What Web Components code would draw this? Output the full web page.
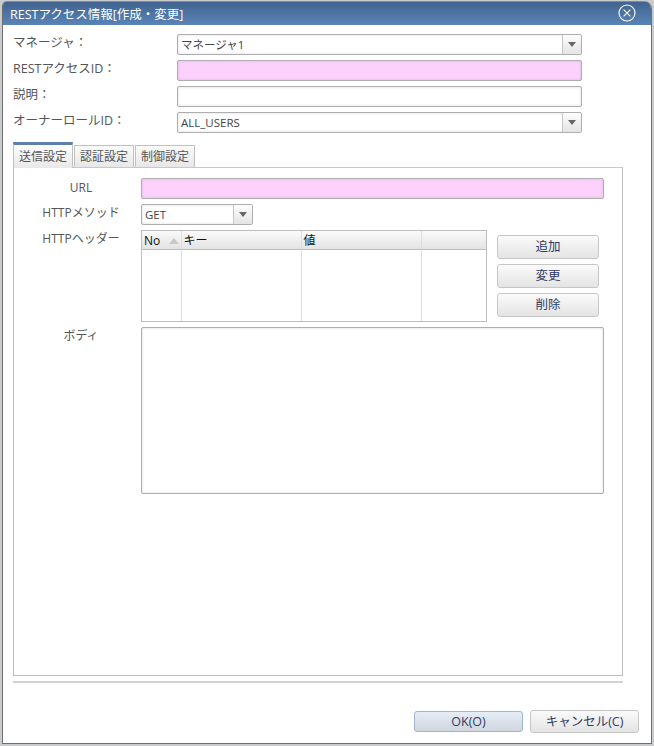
<!DOCTYPE html>
<html lang="ja"><head><meta charset="utf-8">
<style>
html,body{margin:0;height:746px;overflow:hidden;background:#c9cbcc}
body{font:12px "Open Sans","Noto Sans CJK JP",sans-serif;color:#555;padding:1px 2px 2px}
</style></head><body>
<x-dialog heading="RESTアクセス情報[作成・変更]">
  <x-row label="マネージャ："><x-select value="マネージャ1" w="405"></x-select></x-row>
  <x-row label="RESTアクセスID："><x-input w="405" required></x-input></x-row>
  <x-row label="説明："><x-input w="405"></x-input></x-row>
  <x-row label="オーナーロールID："><x-select value="ALL_USERS" w="405"></x-select></x-row>
  <x-tabs>
    <x-form-row label="URL" nudge="2" style="margin-top:10px"><x-input w="463" required></x-input></x-form-row>
    <x-form-row label="HTTPメソッド" style="margin-top:5px"><x-select value="GET" w="112"></x-select></x-form-row>
    <x-form-row label="HTTPヘッダー" style="margin-top:5px">
      <x-grid></x-grid>
      <x-stack><x-btn>追加</x-btn><x-btn>変更</x-btn><x-btn>削除</x-btn></x-stack>
    </x-form-row>
    <x-form-row label="ボディ" style="margin-top:5px"><x-textarea></x-textarea></x-form-row>
  </x-tabs>
  <x-footer slot="footer"><x-btn primary w="109" h="21">OK(O)</x-btn><x-btn w="109" h="23">キャンセル(C)</x-btn></x-footer>
</x-dialog>
<script>
function def(name,css,html,init){
  customElements.define(name,class extends HTMLElement{
    connectedCallback(){
      if(this.shadowRoot)return;
      const r=this.attachShadow({mode:'open'});
      r.innerHTML='<style>'+css+'</style>'+(typeof html==='function'?html(this):html);
      if(init)init(this,r);
    }
  });
}
const field=`box-sizing:border-box;border:1px solid #aeaeae;border-radius:2px;box-shadow:inset 0 0 3px rgba(0,0,0,.14);`;
def('x-dialog',`
 :host{display:flex;flex-direction:column;box-sizing:border-box;width:650px;height:743px;background:#fff;border:1px solid #6e6e6e;border-top:0;border-radius:5px 8px 0 0;overflow:hidden}
 header{height:23px;flex:none;display:flex;align-items:center;justify-content:space-between;padding:0 15px 1px 7px;box-sizing:content-box;height:22px;background:linear-gradient(#40638f,#5a84b7);color:#fff;font-size:12.5px;border-top:1px solid #8a8a8a}
 svg{display:block}
 main{flex:1;padding:9px 27px 0 10px;display:flex;flex-direction:column;gap:5px;min-height:0}
 footer{flex:none}
`,h=>`<header><span>${h.getAttribute('heading')}</span><svg width="18" height="18" viewBox="0 0 18 18" fill="none" stroke="#fff"><circle cx="9" cy="9" r="8" stroke-width="1.1"/><path d="M5.6 5.6l6.8 6.8M12.4 5.6l-6.8 6.8" stroke-width="1.1"/></svg></header><main><slot></slot></main><footer><slot name="footer"></slot></footer>`);
def('x-row',`:host{display:flex;height:21px;align-items:flex-start;line-height:16px}
 span{width:164px;flex:none;white-space:nowrap;color:#555;font-size:12.5px;padding-top:1px;box-sizing:border-box}`,
 h=>`<span>${h.getAttribute('label')}</span><slot></slot>`);
def('x-form-row',`:host{display:flex;line-height:16px;align-items:flex-start}
 span{box-sizing:border-box;width:127px;flex:none;padding-left:7px;text-align:center;white-space:nowrap;color:#555}
 .c{display:flex;gap:10px}`,
 h=>`<span style="padding-top:${h.getAttribute('nudge')||1}px">${h.getAttribute('label')}</span><div class="c"><slot></slot></div>`);
def('x-input',`:host{display:block;height:21px;${field}background:#fff}
 :host([required]){background:#fcd2fd}`,'',h=>{h.style.width=h.getAttribute('w')+'px'});
def('x-select',`:host{display:flex;height:21px;${field}background:#fff;overflow:hidden}
 span{flex:1;padding-left:3px;line-height:19px;color:#444;font-size:11.5px}
 i{width:18px;flex:none;border-left:1px solid #c4c4c4;background:linear-gradient(#fdfdfd,#e4e4e4);display:flex;align-items:center;justify-content:center}
 i::before{content:"";border:4px solid transparent;border-top:5px solid #666;border-bottom:0}`,
 h=>`<span>${h.getAttribute('value')}</span><i></i>`,h=>{h.style.width=h.getAttribute('w')+'px'});
def('x-tabs',`:host{display:flex;flex-direction:column;margin-top:3px;flex:1;width:610px}
 nav{display:flex;height:26px;gap:1px;align-items:flex-end}
 b{box-sizing:border-box;font-weight:400;height:23px;width:60px;border:1px solid #c0c0c0;border-bottom:0;background:linear-gradient(#fbfbfb,#e6e6e6);line-height:22px;text-align:center;color:#555;font-size:12px;margin-bottom:-1px}
 b.a{height:26px;border-top:3px solid #5c7fae;background:linear-gradient(#fff,#e8e8e8);line-height:23px;position:relative;z-index:1}
 section{box-sizing:border-box;height:509px;border:1px solid #bdbdbd;background:#fff;border-top-color:#c8c8c8}`,
 `<nav><b class="a">送信設定</b><b>認証設定</b><b>制御設定</b></nav><section><slot></slot></section>`);
def('x-grid',`:host{display:block;box-sizing:border-box;width:346px;height:92px;border:1px solid #bdbdbd;background:#fff;color:#111}
 table{border-collapse:collapse;table-layout:fixed;width:344px;height:90px}
 th,td{padding:0 2px;border-right:1px solid #ddd;font-weight:400;text-align:left}
 th:last-child,td:last-child{border-right:0}
 th{height:18px;line-height:17px;background:linear-gradient(#fafafa,#e3e3e3);border-bottom:1px solid #bdbdbd;overflow:hidden;white-space:nowrap}
 svg{margin-left:9px;vertical-align:1px}`,
 `<table><colgroup><col style="width:39px"><col style="width:120px"><col style="width:120px"><col></colgroup><tr><th>No<svg width="10" height="6"><path d="M0 6L5 0L10 6Z" fill="#c8c8c8"/></svg></th><th>キー</th><th>値</th><th></th></tr><tr><td></td><td></td><td></td><td></td></tr></table>`);
def('x-stack',`:host{display:flex;flex-direction:column;gap:5px;padding-top:5px}`,'<slot></slot>');
def('x-btn',`:host{display:block;box-sizing:border-box;width:102px;height:24px;border:1px solid #c6c6c6;border-radius:3px;background:linear-gradient(#fafafa,#e4e4e4);text-align:center;line-height:22px;color:#2c3a66;font-size:12.5px}
 :host([primary]){background:linear-gradient(#e6edf6,#d0d6de);border-color:#9fb5d2}`,'<slot></slot>',
 h=>{if(h.getAttribute('w'))h.style.width=h.getAttribute('w')+'px';if(h.getAttribute('h')){h.style.height=h.getAttribute('h')+'px';h.style.lineHeight=(h.getAttribute('h')-2)+'px'}});
def('x-textarea',`:host{display:block;width:463px;height:167px;${field}background:#fff}`,'');
def('x-footer',`:host{box-sizing:border-box;display:flex;justify-content:flex-end;align-items:center;gap:7px;height:52px;padding:9px 12px 0 0;position:relative}
 :host::before{content:"";position:absolute;left:10px;top:-10px;width:610px;height:2px;background:#d2d2d2}`,
 `<slot></slot>`);
</script>
</body></html>
